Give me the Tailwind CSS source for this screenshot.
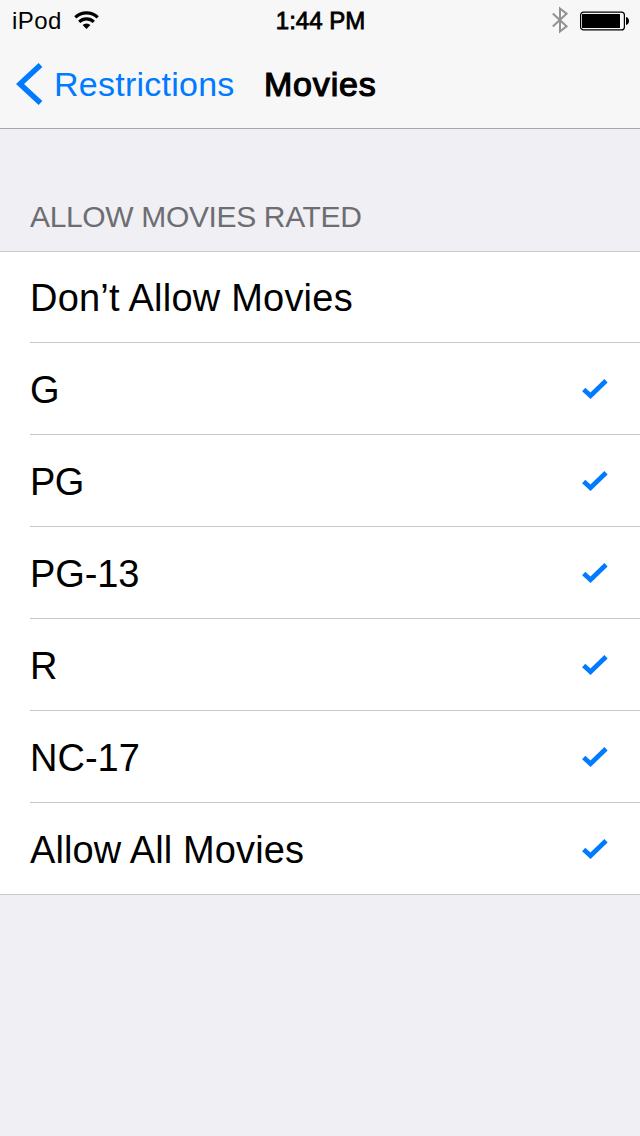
<!DOCTYPE html>
<html lang="en">
<head>
<meta charset="utf-8">
<title>Movies</title>
<script src="https://cdn.jsdelivr.net/npm/@tailwindcss/browser@4"></script>
</head>
<body class="h-[1136px] w-[640px] overflow-hidden bg-[#efeff4] font-['Liberation_Sans',Arial,sans-serif] text-black">
<header class="h-[129px] border-b border-[#a7a7aa] bg-[#f7f7f7]">
  <div class="grid h-10 grid-cols-3 items-center pt-0.5 pl-3 pr-[11px]">
    <div class="flex items-center gap-3">
      <span class="text-[24px] leading-9 tracking-[0.4px]">iPod</span>
      <svg class="mb-0.5 h-[18px] w-[25px]" viewBox="0 0 25 18" fill="none" stroke="#000" stroke-width="3.200"><path d="M1.300 6.400a16.200 16.200 0 0 1 22.400 0"/><path d="M5.200 10.900a10.500 10.500 0 0 1 14.600 0"/><path d="M12.500 18L8.600 14a5.500 5.500 0 0 1 7.800 0z" fill="#000" stroke="none"/></svg>
    </div>
    <span class="justify-self-center whitespace-nowrap text-[24px] leading-9 [-webkit-text-stroke:0.8px_#000]">1:44 PM</span>
    <div class="flex items-center gap-3 justify-self-end">
      <svg class="mb-0.5 h-7 w-4" viewBox="0 0 16 28" fill="none" stroke="#929292" stroke-width="2"><path d="M.8 7.500l13.700 12.800L8 25.500V2.500l6.500 5.200L.8 20.500"/></svg>
      <svg class="h-5 w-[49px]" viewBox="0 0 49 20"><rect x=".6" y="1.100" width="43.800" height="17.800" rx="3" fill="none" stroke="#000" stroke-width="1.200"/><rect x="2" y="3" width="38" height="14" rx=".5"/><path d="M46 6c4 1 4 7 0 8z"/></svg>
    </div>
  </div>
  <nav class="flex h-[88px] items-center pl-4">
    <svg class="h-[42px] w-[27px] shrink-0" viewBox="0 0 27 42" fill="none" stroke="#007aff" stroke-width="5.500"><path d="M24.500 2L4 21l20.500 19"/></svg>
    <span class="ml-[11px] w-[210px] text-[34px] leading-[42px] tracking-[0.25px] text-[#007aff]">Restrictions</span>
    <h1 class="text-[34px] leading-[42px] tracking-[0.8px] [-webkit-text-stroke:1.200px_#000]">Movies</h1>
  </nav>
</header>
<main>
  <h2 class="flex h-[122px] items-end pb-4 pl-[30px] text-[30px] leading-9 tracking-[-0.35px] text-[#6d6d72]">ALLOW MOVIES RATED</h2>
  <ul class="border-y border-[#c8c7cc] bg-white pl-[30px] text-[38px] leading-[44px]">
    <li class="flex h-[91px] items-center border-b border-[#c8c7cc] pt-0.5 tracking-[0.22px]">Don’t Allow Movies</li>
    <li class="flex h-[92px] items-center justify-between border-b border-[#c8c7cc] pt-0.5 pr-8 tracking-[-0.6px]">G<svg class="mb-0.5 h-[22px] w-[27px]" viewBox="0 0 27 22" fill="none" stroke="#007aff" stroke-width="4.700"><path d="M2.700 11.500L9.500 17.800 25 2.700"/></svg></li>
    <li class="flex h-[92px] items-center justify-between border-b border-[#c8c7cc] pt-0.5 pr-8 tracking-[-0.6px]">PG<svg class="mb-0.5 h-[22px] w-[27px]" viewBox="0 0 27 22" fill="none" stroke="#007aff" stroke-width="4.700"><path d="M2.700 11.500L9.500 17.800 25 2.700"/></svg></li>
    <li class="flex h-[92px] items-center justify-between border-b border-[#c8c7cc] pt-0.5 pr-8 tracking-[-0.1px]">PG-13<svg class="mb-0.5 h-[22px] w-[27px]" viewBox="0 0 27 22" fill="none" stroke="#007aff" stroke-width="4.700"><path d="M2.700 11.500L9.500 17.800 25 2.700"/></svg></li>
    <li class="flex h-[92px] items-center justify-between border-b border-[#c8c7cc] pt-0.5 pr-8">R<svg class="mb-0.5 h-[22px] w-[27px]" viewBox="0 0 27 22" fill="none" stroke="#007aff" stroke-width="4.700"><path d="M2.700 11.500L9.500 17.800 25 2.700"/></svg></li>
    <li class="flex h-[92px] items-center justify-between border-b border-[#c8c7cc] pt-0.5 pr-8">NC-17<svg class="mb-0.5 h-[22px] w-[27px]" viewBox="0 0 27 22" fill="none" stroke="#007aff" stroke-width="4.700"><path d="M2.700 11.500L9.500 17.800 25 2.700"/></svg></li>
    <li class="flex h-[91px] items-center justify-between pt-0.5 pr-8 tracking-[0.1px]">Allow All Movies<svg class="mb-0.5 h-[22px] w-[27px]" viewBox="0 0 27 22" fill="none" stroke="#007aff" stroke-width="4.700"><path d="M2.700 11.500L9.500 17.800 25 2.700"/></svg></li>
  </ul>
</main>
</body>
</html>
